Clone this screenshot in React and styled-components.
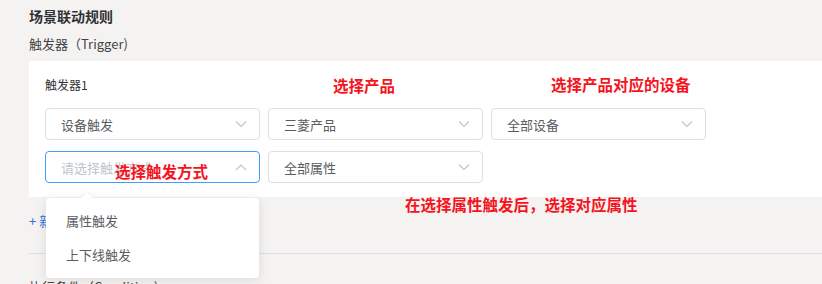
import React from "react";
import styled, { createGlobalStyle } from "styled-components";

const GlobalStyle = createGlobalStyle`
  html, body {
    margin: 0;
    padding: 0;
    background: #f4f3f2;
    font-family: "Noto Sans CJK SC", "Noto Sans", sans-serif;
    overflow: hidden;
  }
`;

const Page = styled.div`
  position: relative;
  height: 284px;
  padding: 6px 0 0 29px;
  box-sizing: border-box;
  overflow: hidden;
`;

const Title = styled.div`
  font-size: 14px;
  line-height: 20px;
  font-weight: bold;
  color: #303133;
`;

const SectionLabel = styled.div`
  margin-top: ${(p) => p.$top || 0}px;
  font-size: 13px;
  line-height: 20px;
  color: #444;
`;

const Panel = styled.div`
  margin-top: 7px;
  background: #fff;
  padding: 14px 16px 14px;
`;

const PanelLabel = styled.div`
  font-size: 12px;
  line-height: 20px;
  color: #303133;
  margin-bottom: 13px;
`;

const Rows = styled.div`
  display: flex;
  flex-direction: column;
  gap: 11px;
`;

const Row = styled.div`
  display: flex;
  gap: 8px;
`;

const SelectBox = styled.div`
  position: relative;
  width: 215px;
  height: 32px;
  box-sizing: border-box;
  border: 1px solid ${(p) => (p.$focus ? "#409eff" : "#dcdfe6")};
  border-radius: 4px;
  display: flex;
  align-items: center;
  padding: 0 15px;
  font-size: 13px;
  color: ${(p) => (p.$placeholder ? "#c0c4cc" : "#5a5c61")};
  background: #fff;
`;

const Value = styled.span`
  flex: 1;
`;

const Arrow = styled.svg`
  width: 12px;
  height: 8px;
  margin-right: -3px;
`;

const Dropdown = styled.div`
  position: absolute;
  left: 0;
  top: 46px;
  width: 213px;
  padding: 6px 0;
  background: #fff;
  border-radius: 4px;
  box-shadow: 0 2px 12px rgba(0, 0, 0, 0.1);
  z-index: 5;

  &::before {
    content: "";
    position: absolute;
    top: -6px;
    left: 35px;
    border-left: 6px solid transparent;
    border-right: 6px solid transparent;
    border-bottom: 6px solid #fff;
    filter: drop-shadow(0 -1px 1px rgba(0, 0, 0, 0.05));
  }
`;

const Option = styled.div`
  height: 34px;
  line-height: 34px;
  padding: 0 20px;
  font-size: 13px;
  color: #5a5c61;
`;

const AddLink = styled.div`
  margin-top: 14px;
  font-size: 13px;
  line-height: 20px;
  color: #2f6fd6;
`;

const Divider = styled.div`
  margin-top: 22px;
  height: 1px;
  background: #dcdfe6;
`;

const Note = styled.div`
  position: absolute;
  left: ${(p) => p.$x}px;
  top: ${(p) => p.$y}px;
  font-size: 15.5px;
  line-height: 20px;
  font-weight: bold;
  color: #f5141e;
  white-space: nowrap;
  z-index: 10;
`;

const Chevron = ({ up }) => (
  <Arrow viewBox="0 0 12 8">
    <path
      d={up ? "M1 7 L6 2 L11 7" : "M1 1.5 L6 6.5 L11 1.5"}
      fill="none"
      stroke="#c0c4cc"
      strokeWidth="1.2"
    />
  </Arrow>
);

const Select = ({ value, placeholder, focus, children }) => (
  <SelectBox $focus={focus} $placeholder={!value}>
    <Value>{value || placeholder}</Value>
    <Chevron up={focus} />
    {children}
  </SelectBox>
);

export default function App() {
  return (
    <>
      <GlobalStyle />
      <Page>
        <Title>场景联动规则</Title>
        <SectionLabel $top={8}>触发器（Trigger)</SectionLabel>
        <Panel>
          <PanelLabel>触发器1</PanelLabel>
          <Rows>
            <Row>
              <Select value="设备触发" />
              <Select value="三菱产品" />
              <Select value="全部设备" />
            </Row>
            <Row>
              <Select placeholder="请选择触发方式" focus>
                <Dropdown>
                  <Option>属性触发</Option>
                  <Option>上下线触发</Option>
                </Dropdown>
              </Select>
              <Select value="全部属性" />
            </Row>
          </Rows>
        </Panel>
        <AddLink>+ 新增触发器</AddLink>
        <Divider />
        <SectionLabel $top={23}>执行条件（Condition)</SectionLabel>

        <Note $x={333} $y={75}>选择产品</Note>
        <Note $x={551} $y={74}>选择产品对应的设备</Note>
        <Note $x={115} $y={161}>选择触发方式</Note>
        <Note $x={405} $y={194}>在选择属性触发后，选择对应属性</Note>
      </Page>
    </>
  );
}
